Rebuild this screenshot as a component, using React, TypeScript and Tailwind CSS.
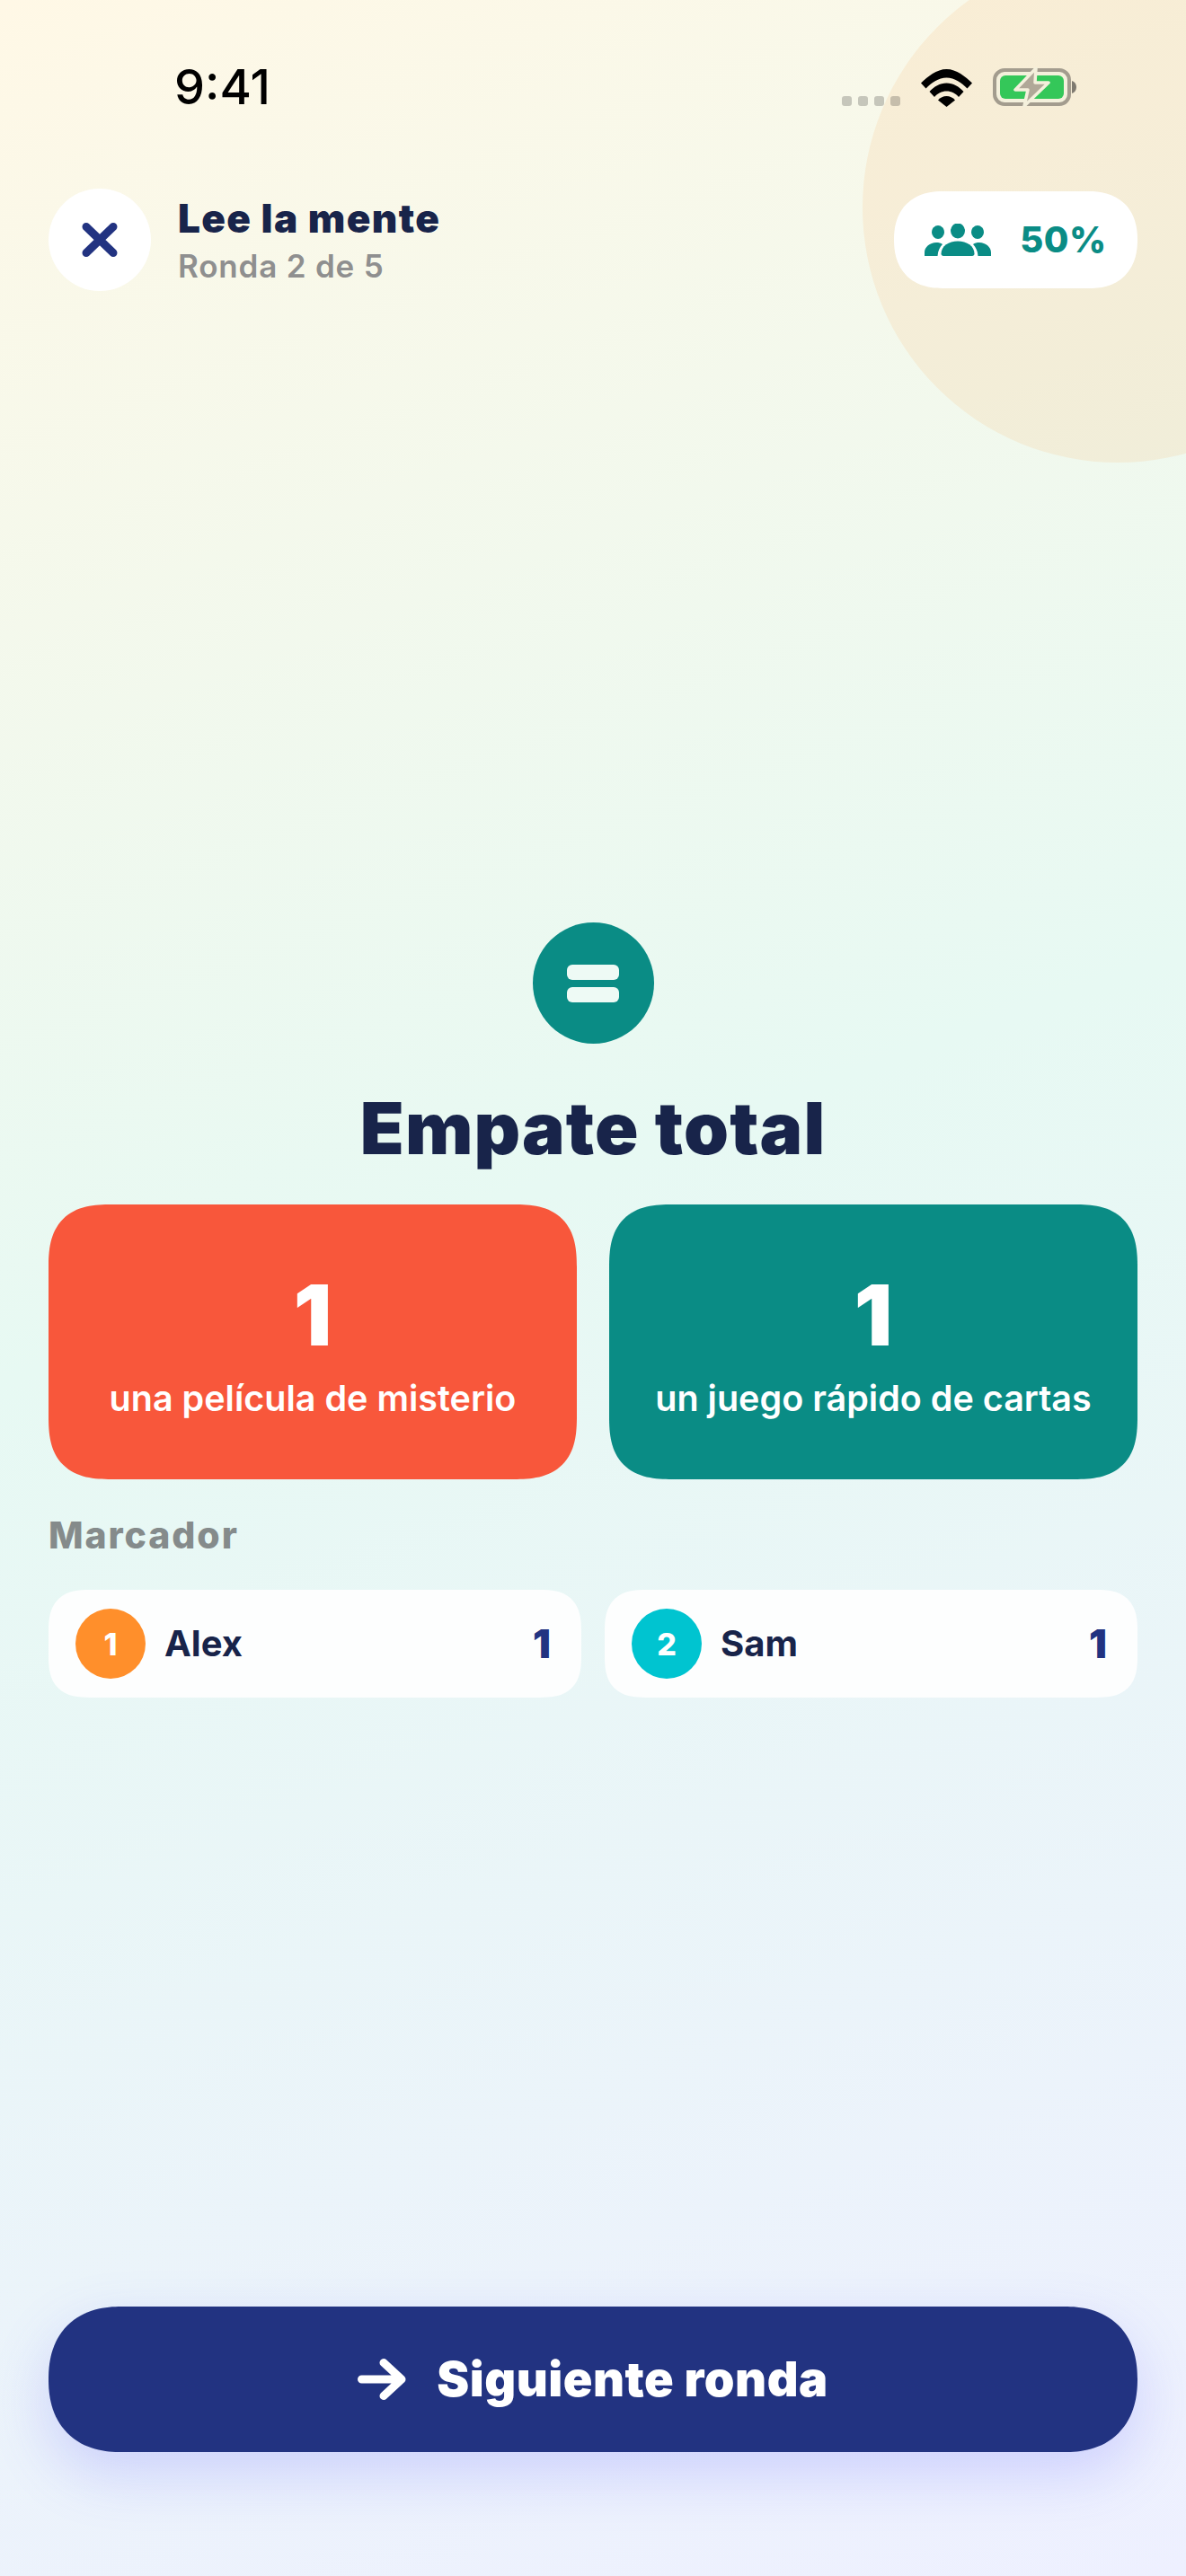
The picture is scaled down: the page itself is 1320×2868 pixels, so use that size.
import React from 'react';

const players = [
  { id: 1, name: 'Alex', score: 1, color: 'bg-[#ff8f2b]' },
  { id: 2, name: 'Sam', score: 1, color: 'bg-[#00c4d0]' },
];

const options = [
  { label: 'una película de misterio', votes: 1, color: 'bg-[#f8573b]' },
  { label: 'un juego rápido de cartas', votes: 1, color: 'bg-[#0a8c85]' },
];

const WifiIcon = () => (
  <svg width="57" height="42" viewBox="0 0 57 42" fill="#000">
    <path d="M0 15.5C7.5 8.4 17.5 0 28.5 0S49.500 8.400 57 15.500L51.500 21.500C45.500 15.500 37.500 9.500 28.500 9.500S11.500 15.500 5.500 21.500Z" />
    <path d="M9.500 25C14.500 19.500 21 15.500 28.500 15.500S42.500 19.500 47.500 25L42 31C38.500 27 34 24.500 28.500 24.500S18.500 27 15 31Z" />
    <path d="M19 34.500C21.500 31.500 24.800 30 28.500 30S35.500 31.500 38 34.500L28.500 42Z" />
  </svg>
);

const BatteryIcon = () => (
  <svg width="93" height="44" viewBox="0 0 93 44">
    <rect x="2" y="3" width="83" height="38" rx="11" fill="#f4f0dc" stroke="#a39c8e" strokeWidth="4" />
    <rect x="8" y="9" width="71" height="26" rx="6" fill="#34c759" />
    <path d="M88 15c3 1 5 3.500 5 7s-2 6-5 7Z" fill="#7f7a70" />
    <path d="M48 1 25 25H39L35 43 62 17H47Z" fill="#b0a898" stroke="#f4f0dc" strokeWidth="3.500" strokeLinejoin="round" />
  </svg>
);

const PeopleIcon = () => (
  <svg width="74" height="36" viewBox="0 0 74 36" fill="#0a8c85">
    <ellipse cx="15" cy="9.500" rx="7" ry="7.500" />
    <ellipse cx="59" cy="9.500" rx="7" ry="7.500" />
    <ellipse cx="37" cy="8" rx="8" ry="8.500" />
    <path d="M0 36v-4c0-6 6-11 13-11 3 0 5 .6 7 2-3 3-5 7-5.500 13Z" />
    <path d="M74 36v-4c0-6-6-11-13-11-3 0-5 .6-7 2 3 3 5 7 5.500 13Z" />
    <path d="M21 36c-1.500 0-2.500-1-2.500-2.500C18.500 25 27 19.500 37 19.500S55.500 25 55.500 33.500c0 1.500-1 2.500-2.500 2.500Z" />
  </svg>
);

export default function App() {
  return (
    <div className="relative flex h-[2868px] w-full flex-col overflow-hidden bg-[linear-gradient(160deg,#fff8e6_0%,#e7f9f3_46%,#eef0ff_100%)] font-['Inter',sans-serif]">
      {/* decorative blob, top right */}
      <div className="absolute left-[960px] top-[-53px] h-[568px] w-[568px] rounded-full bg-[#ff8f2b]/10" />

      {/* status bar */}
      <div className="relative flex h-[210px] items-start justify-between pl-[194px] pr-[122px] pt-[66px]">
        <span className="text-[54px] font-medium leading-[62px] text-black">9:41</span>
        <div className="flex items-end pt-[9px]">
          <div className="mb-[1px] flex gap-[7px]">
            {[0, 1, 2, 3].map((dot) => (
              <div key={dot} className="h-[11px] w-[11px] rounded-[3px] bg-black/20" />
            ))}
          </div>
          <div className="ml-[23px]"><WifiIcon /></div>
          <div className="ml-[23px]"><BatteryIcon /></div>
        </div>
      </div>

      {/* header */}
      <div className="relative flex items-center justify-between px-[54px]">
        <div className="flex items-center gap-[30px]">
          <button className="flex h-[114px] w-[114px] items-center justify-center rounded-full bg-white">
            <svg width="40" height="40" viewBox="0 0 40 40" fill="none" stroke="#223381" strokeWidth="9" strokeLinecap="round">
              <path d="M5 5.500 35 34.500M35 5.500 5 34.500" />
            </svg>
          </button>
          <div className="flex flex-col">
            <span className="text-[44px] font-black leading-[54px] tracking-[1.4px] text-[#18244a]">Lee la mente</span>
            <span className="mt-[4px] text-[35px] font-semibold leading-[44px] tracking-[0.8px] text-[#8f8f8f]">Ronda 2 de 5</span>
          </div>
        </div>
        <div className="flex h-[108px] w-[271px] items-center justify-center gap-[32px] rounded-[54px] bg-white [corner-shape:superellipse(1.2)]">
          <PeopleIcon />
          <span className="text-[40px] font-extrabold tracking-[0.5px] text-[#0a8c85]">50%</span>
        </div>
      </div>

      {/* result */}
      <main className="relative flex flex-1 flex-col justify-center px-[54px] pt-[25px]">
        <div className="flex h-[135px] w-[135px] flex-col items-center justify-center gap-[8px] self-center rounded-full bg-[#0a8c85]">
          <div className="h-[17px] w-[58px] rounded-[6px] bg-[#eefaf5]" />
          <div className="h-[17px] w-[58px] rounded-[6px] bg-[#eefaf5]" />
        </div>
        <h1 className="mt-[44px] text-center text-[80px] font-black leading-[100px] tracking-[1.1px] text-[#18244a]">Empate total</h1>
        <div className="mt-[35px] grid grid-cols-2 gap-[36px]">
          {options.map((option) => (
            <div key={option.label} className={`flex h-[306px] flex-col items-center justify-center rounded-[70px] [corner-shape:superellipse(1.4)] ${option.color}`}>
              <span className="text-[94px] font-black leading-[114px] text-white">{option.votes}</span>
              <span className="mt-[12px] text-[39.5px] font-semibold leading-[48px] text-white">{option.label}</span>
            </div>
          ))}
        </div>
        <p className="mt-[38px] text-[41px] font-extrabold leading-[48px] tracking-[1.9px] text-[#858b8b]">Marcador</p>
        <div className="mt-[37px] grid grid-cols-2 gap-[26px]">
          {players.map((player) => (
            <div key={player.id} className="flex h-[120px] items-center rounded-[46px] bg-white/90 pl-[30px] pr-[34px] [corner-shape:superellipse(1.4)]">
              <div className={`flex h-[78px] w-[78px] items-center justify-center rounded-full text-[34px] font-extrabold text-white ${player.color}`}>
                {player.id}
              </div>
              <span className="ml-[21px] text-[40px] font-bold text-[#18244a]">{player.name}</span>
              <span className="ml-auto text-[44px] font-black text-[#223381]">{player.score}</span>
            </div>
          ))}
        </div>
      </main>

      {/* footer action */}
      <div className="relative px-[54px] pb-[138px]">
        <button className="flex h-[162px] w-full items-center justify-center gap-[34px] rounded-[81px] bg-[#223381] shadow-[0_24px_64px_rgba(90,90,255,0.22)] [corner-shape:superellipse(1.2)]">
          <svg width="54" height="46" viewBox="0 0 54 46" fill="none" stroke="#fff" strokeWidth="9" strokeLinecap="round" strokeLinejoin="round">
            <path d="M4.500 23H48M29 4.500 49 23 29 41.500" />
          </svg>
          <span className="text-[54px] font-black leading-none tracking-[0.5px] text-white">Siguiente ronda</span>
        </button>
      </div>
    </div>
  );
}
